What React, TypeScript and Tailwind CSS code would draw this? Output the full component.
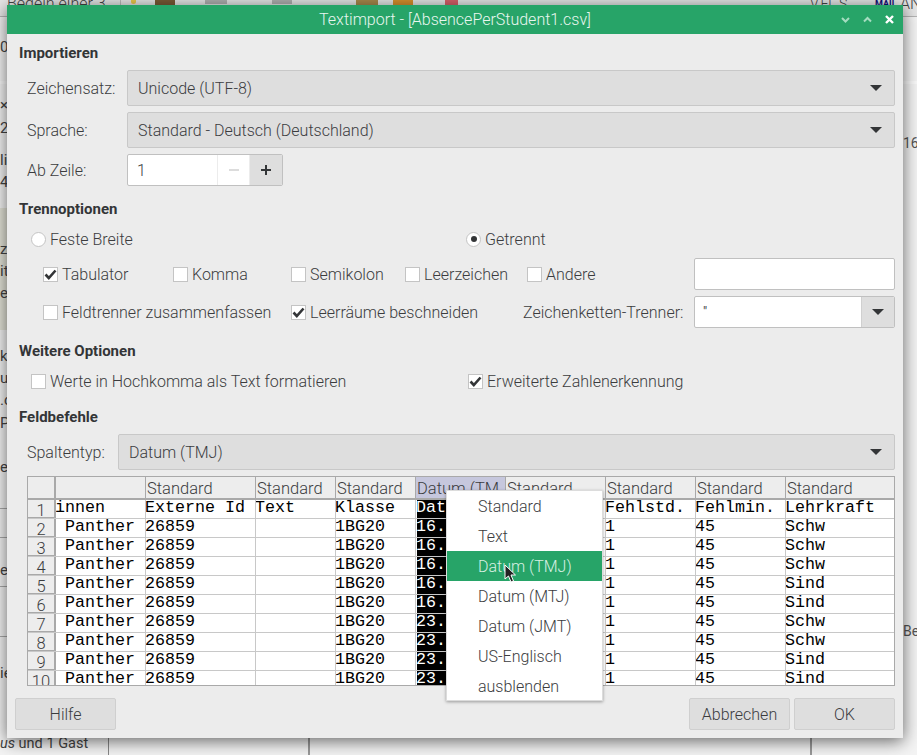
import React from "react";

const labelFont = "font-['Roboto',sans-serif] font-light text-[#3b3c3e]";
const widths = ["w-[90px]", "w-[110px]", "w-[80px]", "w-[80px]", "w-[90px]", "w-[100px]", "w-[90px]", "w-[90px]", "w-[110px]"];

const rows: string[][] = [
  ["innen", "Externe Id", "Text", "Klasse", "Datum", "", "Fehlstd.", "Fehlmin.", "Lehrkraft"],
  [" Panther", "26859", "", "1BG20", "16.09", "", "1", "45", "Schw"],
  [" Panther", "26859", "", "1BG20", "16.09", "", "1", "45", "Schw"],
  [" Panther", "26859", "", "1BG20", "16.09", "", "1", "45", "Schw"],
  [" Panther", "26859", "", "1BG20", "16.09", "", "1", "45", "Sind"],
  [" Panther", "26859", "", "1BG20", "16.09", "", "1", "45", "Sind"],
  [" Panther", "26859", "", "1BG20", "23.09", "", "1", "45", "Schw"],
  [" Panther", "26859", "", "1BG20", "23.09", "", "1", "45", "Schw"],
  [" Panther", "26859", "", "1BG20", "23.09", "", "1", "45", "Sind"],
  [" Panther", "26859", "", "1BG20", "23.09", "", "1", "45", "Sind"],
];

const headers = ["", "Standard", "Standard", "Standard", "Datum (TMJ)", "Standard", "Standard", "Standard", "Standard"];
const menuItems = ["Standard", "Text", "Datum (TMJ)", "Datum (MTJ)", "Datum (JMT)", "US-Englisch", "ausblenden"];

// bits of the app window that stick out left and right of the dialog
const leftBits: [string, string][] = [
  ["0", "top-[37px]"],
  ["×", "top-[95px]"],
  ["25", "top-[118px]"],
  ["li", "top-[150px]"],
  ["4", "top-[172px]"],
  ["z", "top-[239px]"],
  ["it", "top-[261px]"],
  ["e", "top-[283px]"],
  ["ke", "top-[346px]"],
  ["ur", "top-[368px]"],
  [".c", "top-[390px]"],
  ["P", "top-[413px]"],
  ["e", "top-[457px]"],
  ["el", "top-[560px]"],
  ["ie", "top-[663px]"],
];

function Caret() {
  return <div className="w-0 h-0 border-x-[6px] border-x-transparent border-t-[6px] border-t-[#333537]" />;
}

function Select({ value, className }: { value: string; className: string }) {
  return (
    <div className={`h-9 flex items-center justify-between pl-[10px] pr-[12px] bg-[#dedede] border border-[#c8c8c8] rounded-[2px] ${className}`}>
      <span className={`pt-[2px] text-[16px] ${labelFont}`}>{value}</span>
      <Caret />
    </div>
  );
}

function Check({ label, checked, className }: { label: string; checked?: boolean; className?: string }) {
  return (
    <div className={`flex items-center gap-[4px] ${className ?? ""}`}>
      <div className="w-[15px] h-[15px] bg-white border border-[#c4c4c4] flex items-center justify-center shrink-0">
        {checked && (
          <svg width="13" height="13" viewBox="0 0 13 13">
            <path d="M1.5 6.5 L4.8 10 L11.5 2.5" fill="none" stroke="#333537" strokeWidth="2.6" />
          </svg>
        )}
      </div>
      <span className={`pt-[2px] text-[16px] leading-5 whitespace-nowrap ${labelFont}`}>{label}</span>
    </div>
  );
}

function Radio({ label, checked, className }: { label: string; checked?: boolean; className?: string }) {
  return (
    <div className={`flex items-center gap-[4px] ${className ?? ""}`}>
      <div className="w-[15px] h-[15px] rounded-full bg-white border border-[#c4c4c4] flex items-center justify-center shrink-0">
        {checked && <div className="w-[6px] h-[6px] rounded-full bg-[#333537]" />}
      </div>
      <span className={`pt-[2px] text-[16px] leading-5 whitespace-nowrap ${labelFont}`}>{label}</span>
    </div>
  );
}

function Heading({ children, className }: { children: React.ReactNode; className: string }) {
  return <h3 className={`text-[15px] leading-5 font-bold font-['Roboto',sans-serif] text-[#333537] ${className}`}>{children}</h3>;
}

function Button({ label, className }: { label: string; className?: string }) {
  return (
    <div className={`w-[101px] h-8 flex items-center justify-center pt-[2px] bg-[#dedede] border border-[#cfcfcf] rounded-[2px] text-[16px] ${labelFont} ${className ?? ""}`}>
      {label}
    </div>
  );
}

function Preview() {
  return (
    <div className="mt-[6px] ml-5 w-[868px] h-[210px] border border-[#a9a9a9] overflow-hidden bg-white">
      <div className="flex h-[23px] bg-[#ededed] border-b-2 border-[#a9a9a9]">
        <div className="w-[28px] border-r-2 border-[#a9a9a9] shrink-0" />
        {headers.map((h, i) => (
          <div
            key={i}
            className={`${widths[i]} shrink-0 border-r border-[#a9a9a9] pl-[1px] text-[16.5px] leading-[24px] overflow-hidden whitespace-nowrap ${labelFont} ${i === 4 ? "bg-[#c6c7dd]" : ""}`}
          >
            {h}
          </div>
        ))}
      </div>
      {rows.map((row, r) => (
        <div key={r} className="flex h-[19px] border-b border-[#c8c8c8]">
          <div className="w-[28px] shrink-0 bg-[#ededed] border-r-2 border-b border-[#a9a9a9] text-center text-[16.5px] leading-[22px] font-['Roboto',sans-serif] font-light text-[#3b3c3e] overflow-hidden">
            {r + 1}
          </div>
          {row.map((c, i) => (
            <div
              key={i}
              className={`${widths[i]} shrink-0 border-r border-[#c8c8c8] text-[16.67px] leading-[15px] indent-[-1px] font-['Liberation_Mono',monospace] whitespace-pre overflow-hidden ${i === 4 ? "bg-black text-white border-l border-l-white" : "text-black"}`}
            >
              {c}
            </div>
          ))}
        </div>
      ))}
    </div>
  );
}

export default function App() {
  return (
    <div className="relative w-[917px] h-[755px] overflow-hidden bg-[#f4f4f4]">
      {/* app toolbar behind the dialog */}
      <div className="relative h-[17px] bg-[#e6e6e6] border-b border-[#b5b5b5] text-[16px] leading-[8px] font-['Roboto',sans-serif] font-light text-[#444] overflow-hidden">
        <span className="absolute left-[7px] top-0">Bedeih einer 3</span>
        <div className="absolute left-[120px] top-0 w-px h-3 bg-[#bbb]" />
        <div className="absolute left-[131px] top-0 w-[5px] h-1 rounded-b-full bg-[#e8c84a]" />
        <div className="absolute left-[155px] top-0 w-[20px] h-[5px] bg-[#7a5a35]" />
        <div className="absolute left-[205px] top-0 w-[22px] h-1 bg-[#b0b0b0]" />
        <div className="absolute left-[272px] top-0 w-[20px] h-1 bg-[#b0b0b0]" />
        <div className="absolute left-[356px] top-0 w-[22px] h-[5px] bg-[#a98a4c]" />
        <div className="absolute left-[393px] top-0 w-[20px] h-[5px] bg-[#d9912e]" />
        <div className="absolute left-[445px] top-0 w-[13px] h-[5px] bg-[#d9606a]" />
        <span className="absolute left-[810px] top-0 text-[14px]">V.FL.S...</span>
        <span className="absolute left-[875px] top-0 text-[9px] font-bold text-[#10107a]">MAIL</span>
        <span className="absolute left-[900px] top-0">AN</span>
      </div>
      <div className="absolute left-0 top-[81px] w-full h-[3px] bg-[#fafafa]" />
      <div className="absolute left-0 top-[208px] w-[7px] h-[122px] bg-[#e4e4d8]" />
      <div className="absolute left-0 top-[508px] w-[7px] h-px bg-[#aaa]" />
      <div className="absolute left-0 top-[537px] w-[7px] h-px bg-[#aaa]" />
      <div className="absolute left-0 top-[586px] w-[7px] h-px bg-[#aaa]" />
      <div className="absolute left-0 top-[636px] w-[7px] h-px bg-[#aaa]" />
      {leftBits.map(([t, pos]) => (
        <span key={pos} className={`absolute left-0 ${pos} w-[7px] overflow-hidden text-[15px] leading-5 font-['Roboto',sans-serif] text-[#444]`}>
          {t}
        </span>
      ))}
      <span className="absolute left-[903px] top-[133px] text-[14px] leading-5 font-['Roboto',sans-serif] text-[#555]">16,</span>
      <span className="absolute left-[903px] top-[621px] text-[14px] leading-5 font-['Roboto',sans-serif] text-[#555]">Bei</span>
      <div className="absolute left-[108px] top-[738px] w-px h-[17px] bg-[#888]" />
      <div className="absolute left-[308px] top-[738px] w-[2px] h-[17px] bg-[#999]" />
      <div className="absolute left-[810px] top-[738px] w-[2px] h-[17px] bg-[#999]" />
      <div className="absolute left-0 top-[733px] text-[14.5px] font-['Roboto',sans-serif] text-[#444] whitespace-nowrap">
        <span className="italic">us</span> und 1 Gast
      </div>

      {/* dialog */}
      <div className="absolute left-[7px] top-[5px] w-[896px] h-[733px] bg-[#ececec] shadow-[0_3px_16px_rgba(0,0,0,0.6)]">
        <div className="relative h-[29px] bg-[#27a468] flex items-center justify-center text-[16px] font-['Roboto',sans-serif] font-light text-[#e8f6ef]">
          Textimport - [AbsencePerStudent1.csv]
          <div className="absolute right-[8px] top-[9px] flex gap-[11px]">
            <svg width="11" height="11" viewBox="0 0 11 11"><path d="M2 4 L5.5 7.5 L9 4" fill="none" stroke="#a5dcc0" strokeWidth="2" /></svg>
            <svg width="11" height="11" viewBox="0 0 11 11"><path d="M2 7.5 L5.5 4 L9 7.5" fill="none" stroke="#a5dcc0" strokeWidth="2" /></svg>
            <svg width="11" height="11" viewBox="0 0 11 11"><path d="M2 2 L9 9 M9 2 L2 9" fill="none" stroke="#ffffff" strokeWidth="2.4" /></svg>
          </div>
        </div>

        <Heading className="mt-[9px] ml-3">Importieren</Heading>
        <div className="mt-[7px] ml-5 flex items-center">
          <span className={`w-[100px] pt-[2px] text-[16px] ${labelFont}`}>Zeichensatz:</span>
          <Select value="Unicode (UTF-8)" className="w-[768px]" />
        </div>
        <div className="mt-[6px] ml-5 flex items-center">
          <span className={`w-[100px] pt-[2px] text-[16px] ${labelFont}`}>Sprache:</span>
          <Select value="Standard - Deutsch (Deutschland)" className="w-[768px]" />
        </div>
        <div className="mt-[6px] ml-5 flex items-center">
          <span className={`w-[100px] pt-[2px] text-[16px] ${labelFont}`}>Ab Zeile:</span>
          <div className="w-[156px] h-8 flex border border-[#c0c0c0] rounded-[2px] bg-white overflow-hidden">
            <span className={`w-[89px] pl-[9px] text-[16px] leading-[32px] ${labelFont}`}>1</span>
            <div className="w-[33px] border-x border-[#ececec] flex items-center justify-center">
              <div className="w-[10px] h-[2px] bg-[#dcdcdc]" />
            </div>
            <div className="flex-1 bg-[#dedede] flex items-center justify-center relative">
              <div className="w-[10px] h-[2px] bg-[#333537]" />
              <div className="absolute w-[2px] h-[10px] bg-[#333537]" />
            </div>
          </div>
        </div>

        <Heading className="mt-[13px] ml-3">Trennoptionen</Heading>
        <div className="mt-[9px] ml-6 flex">
          <Radio label="Feste Breite" className="w-[435px]" />
          <Radio label="Getrennt" checked />
        </div>
        <div className="mt-[8px] ml-9 flex items-center h-8">
          <Check label="Tabulator" checked className="w-[130px]" />
          <Check label="Komma" className="w-[118px]" />
          <Check label="Semikolon" className="w-[114px]" />
          <Check label="Leerzeichen" className="w-[122px]" />
          <Check label="Andere" className="w-[167px]" />
          <div className="w-[201px] h-8 bg-white border border-[#c0c0c0] rounded-[2px]" />
        </div>
        <div className="mt-[6px] ml-9 flex items-center h-8">
          <Check label="Feldtrenner zusammenfassen" className="w-[248px]" />
          <Check label="Leerräume beschneiden" checked className="w-[232px]" />
          <span className={`w-[171px] pt-[2px] text-[16px] whitespace-nowrap ${labelFont}`}>Zeichenketten-Trenner:</span>
          <div className="w-[201px] h-8 flex bg-white border border-[#c0c0c0] rounded-[2px] overflow-hidden">
            <span className="flex-1 pl-2 text-[13px] leading-[30px] font-['Roboto',sans-serif] text-[#3b3c3e]">"</span>
            <div className="w-[33px] bg-[#dedede] border-l border-[#d0d0d0] flex items-center justify-center"><Caret /></div>
          </div>
        </div>

        <Heading className="mt-[13px] ml-3">Weitere Optionen</Heading>
        <div className="mt-[9px] ml-6 flex">
          <Check label="Werte in Hochkomma als Text formatieren" className="w-[437px]" />
          <Check label="Erweiterte Zahlenerkennung" checked />
        </div>

        <Heading className="mt-[15px] ml-3">Feldbefehle</Heading>
        <div className="mt-[7px] ml-5 flex items-center">
          <span className={`w-[91px] pt-[2px] text-[16px] ${labelFont}`}>Spaltentyp:</span>
          <Select value="Datum (TMJ)" className="w-[777px]" />
        </div>
        <Preview />

        <div className="mt-3 mx-2 flex">
          <Button label="Hilfe" />
          <Button label="Abbrechen" className="ml-auto mr-1" />
          <Button label="OK" />
        </div>
      </div>

      {/* column type context menu */}
      <div className="absolute left-[446px] top-[490px] w-[157px] h-[211px] bg-white border border-[#dcdcdc] shadow-[0_1px_3px_rgba(0,0,0,0.35)]">
        {menuItems.map((item, i) => (
          <div
            key={item}
            className={`h-[30px] pl-[31px] text-[16px] leading-[32px] font-['Roboto',sans-serif] font-light ${i === 2 ? "bg-[#27a468] text-[#d8f0e3]" : "text-[#3b3c3e]"}`}
          >
            {item}
          </div>
        ))}
      </div>

      {/* mouse pointer */}
      <svg className="absolute left-[504px] top-[564px]" width="13" height="20" viewBox="0 0 13 20">
        <path d="M1 1 L1 15 L4.5 12 L7 18 L9.5 17 L7 11 L11.5 11 Z" fill="#222" stroke="#fff" strokeWidth="1" />
      </svg>
    </div>
  );
}
